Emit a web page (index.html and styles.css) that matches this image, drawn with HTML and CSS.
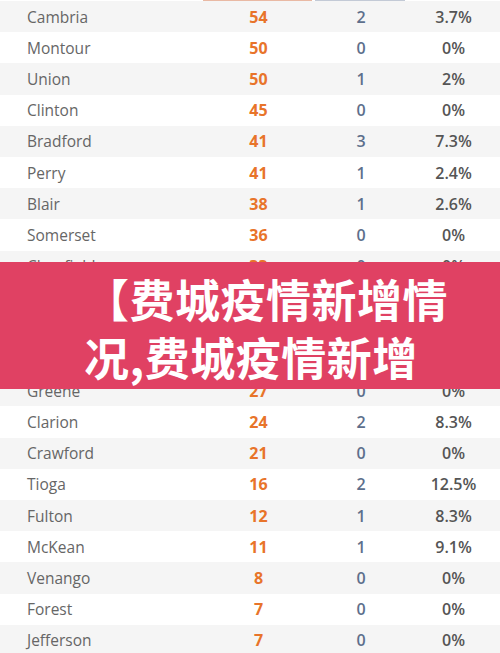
FILE: index.html
```html
<!DOCTYPE html>
<html lang="zh-CN">
<head>
  <meta charset="UTF-8">
  <meta name="viewport" content="width=device-width, initial-scale=1.0">
  <title>费城疫情新增情况</title>
  <link rel="stylesheet" href="styles.css">
</head>
<body>

  <!-- County table -->
  <div class="county-table">
    <div class="head-line">
      <span></span>
      <span class="line-cases"></span>
      <span class="line-deaths"></span>
      <span></span>
    </div>

    <div class="row"><span class="name">Cambria</span><span class="cases">54</span><span class="deaths">2</span><span class="rate">3.7%</span></div>
    <div class="row"><span class="name">Montour</span><span class="cases">50</span><span class="deaths">0</span><span class="rate">0%</span></div>
    <div class="row"><span class="name">Union</span><span class="cases">50</span><span class="deaths">1</span><span class="rate">2%</span></div>
    <div class="row"><span class="name">Clinton</span><span class="cases">45</span><span class="deaths">0</span><span class="rate">0%</span></div>
    <div class="row"><span class="name">Bradford</span><span class="cases">41</span><span class="deaths">3</span><span class="rate">7.3%</span></div>
    <div class="row"><span class="name">Perry</span><span class="cases">41</span><span class="deaths">1</span><span class="rate">2.4%</span></div>
    <div class="row"><span class="name">Blair</span><span class="cases">38</span><span class="deaths">1</span><span class="rate">2.6%</span></div>
    <div class="row"><span class="name">Somerset</span><span class="cases">36</span><span class="deaths">0</span><span class="rate">0%</span></div>
    <div class="row"><span class="name">Clearfield</span><span class="cases">33</span><span class="deaths">0</span><span class="rate">0%</span></div>
    <div class="row"><span class="name">Susquehanna</span><span class="cases">31</span><span class="deaths">1</span><span class="rate">3.2%</span></div>
    <div class="row"><span class="name">Huntingdon</span><span class="cases">29</span><span class="deaths">0</span><span class="rate">0%</span></div>
    <div class="row"><span class="name">Bedford</span><span class="cases">28</span><span class="deaths">1</span><span class="rate">3.6%</span></div>
    <div class="row"><span class="name">Greene</span><span class="cases">27</span><span class="deaths">0</span><span class="rate">0%</span></div>
    <div class="row"><span class="name">Clarion</span><span class="cases">24</span><span class="deaths">2</span><span class="rate">8.3%</span></div>
    <div class="row"><span class="name">Crawford</span><span class="cases">21</span><span class="deaths">0</span><span class="rate">0%</span></div>
    <div class="row"><span class="name">Tioga</span><span class="cases">16</span><span class="deaths">2</span><span class="rate">12.5%</span></div>
    <div class="row"><span class="name">Fulton</span><span class="cases">12</span><span class="deaths">1</span><span class="rate">8.3%</span></div>
    <div class="row"><span class="name">McKean</span><span class="cases">11</span><span class="deaths">1</span><span class="rate">9.1%</span></div>
    <div class="row"><span class="name">Venango</span><span class="cases">8</span><span class="deaths">0</span><span class="rate">0%</span></div>
    <div class="row"><span class="name">Forest</span><span class="cases">7</span><span class="deaths">0</span><span class="rate">0%</span></div>
    <div class="row"><span class="name">Jefferson</span><span class="cases">7</span><span class="deaths">0</span><span class="rate">0%</span></div>
  </div>

  <!-- Title banner over the table -->
  <div class="banner">
    <div class="banner-title">【费城疫情新增情况,费城疫情新增</div>
  </div>

</body>
</html>
```

FILE: styles.css
```css
body {
  margin: 0;
  background: #ffffff;
  font-family: 'Open Sans', 'Noto Sans', sans-serif;
  overflow: hidden;
  position: relative;
  height: 653px;
}

/* County table */
.county-table {
  display: flex;
  flex-direction: column;
}

.head-line,
.row {
  display: grid;
  grid-template-columns: 203px 112px 92px 93px;
}

.head-line {
  height: 1px;
  background: #ffffff;
}

.head-line .line-cases {
  background: #e9b9a4;
  margin-right: 3px;
}

.head-line .line-deaths {
  background: #c3cad6;
  margin-right: 2px;
}

.row {
  height: 31.2px;
  align-items: center;
  font-size: 15.5px;
}

.row:nth-child(even) {
  background: #f5f5f5;
}

.row .name {
  padding-left: 27px;
  color: #666666;
}

.row .cases,
.row .deaths,
.row .rate {
  text-align: center;
  font-size: 16px;
  font-weight: 700;
}

.row .cases {
  color: #e8742a;
  padding-right: 1px;
}

.row .deaths {
  color: #5d6f8c;
  font-weight: 600;
}

.row .rate {
  color: #555555;
  font-weight: 600;
}

/* Banner overlay */
.banner {
  position: absolute;
  top: 262px;
  left: 0;
  right: 0;
  height: 127px;
  background: #e04163;
  box-sizing: border-box;
  padding: 8px 20px 0 84px;
}

.banner-title {
  color: #ffffff;
  font-family: 'Noto Sans CJK SC', 'Noto Sans', sans-serif;
  font-weight: 700;
  font-size: 45px;
  line-height: 58px;
  letter-spacing: 0.5px;
}
```
